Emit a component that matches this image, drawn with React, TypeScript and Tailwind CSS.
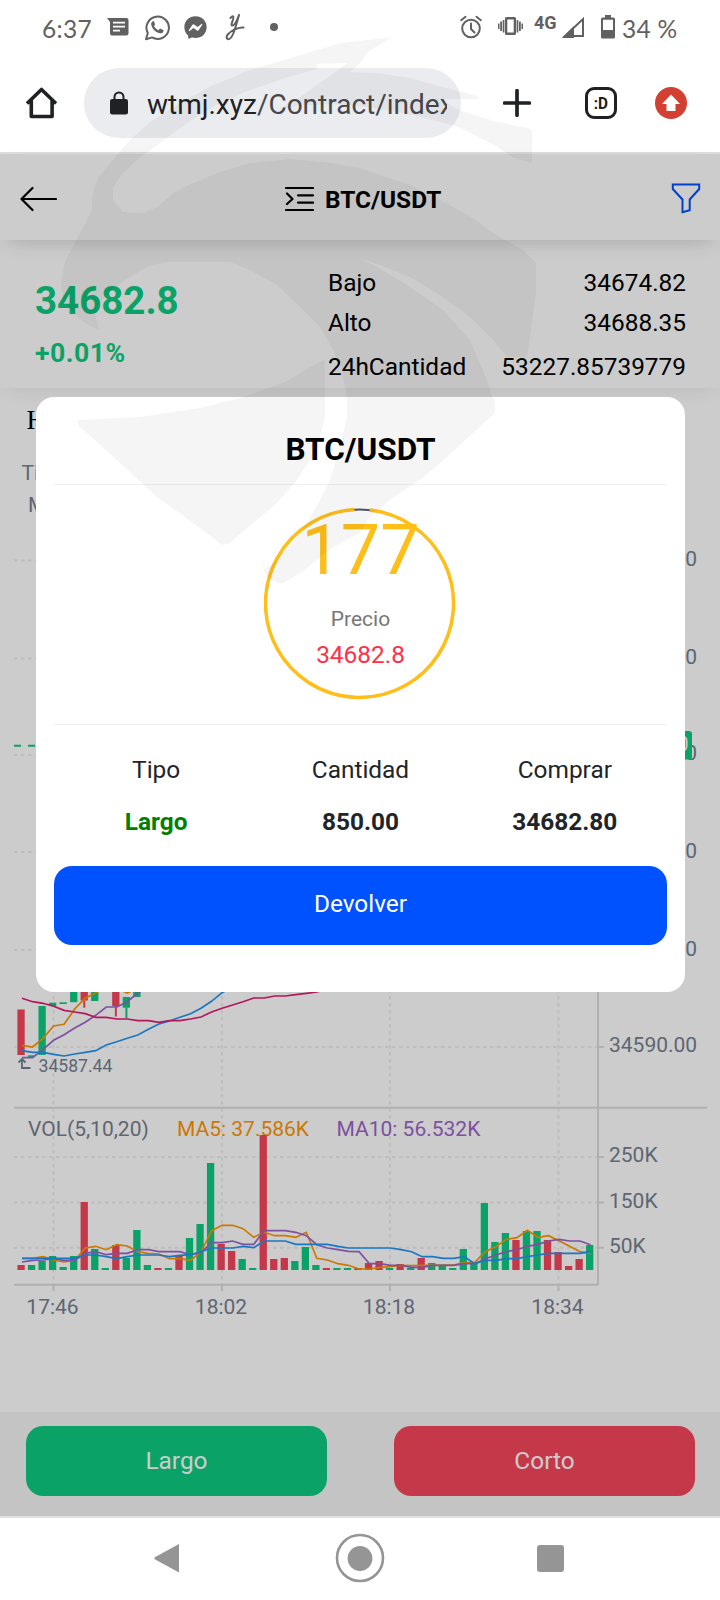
import type { ReactNode } from "react";
import { FaFacebookMessenger } from "react-icons/fa";

const UP = "#0ecb81";
const DOWN = "#f6465d";
const AXIS = "#76808f";
const ORANGE = "#ff9600";
const PURPLE = "#9d65c9";
const BLUE = "#2196f3";
const PINK = "#e11d74";

const BAR_START = 21;
const BAR_STEP = 10.53;
const VOL_BASE = 1270;

// negative = falling bar
const volumes = [
  -5, 5, 9, 14, 3, 14, -68, 21, 2, -25, 12, 40, 5, -2, 2, -14, 32, 46, 107, -26,
  -19, 11, 2, -135, -11, -12, 9, 23, 5, -2, 2, 2, -2, -7, -9, 2, -6, 2, -12, 7,
  4, 2, 21, 7, 67, 28, 37, -30, 39, 39, -30, -18, -4, -11, 25,
];

// line heights above the volume baseline
const volMa5 = [
  35, 35, 40, 30, 24, 29, 66, 71, 61, 76, 72, 55, 50, 48, 34, 34, 29, 53, 118,
  134, 134, 124, 98, 113, 103, 103, 98, 113, 35, 30, 19, 14, 3, 3, 8, 10, 14,
  13, 14, 14, 15, 15, 22, 23, 55, 70, 92, 97, 119, 98, 103, 88, 71, 55, 50,
];
const volMa10 = [
  24, 29, 30, 34, 29, 29, 50, 55, 46, 50, 50, 61, 61, 55, 55, 55, 46, 52, 82,
  82, 87, 77, 77, 118, 118, 118, 113, 103, 76, 66, 61, 56, 55, 19, 19, 14, 14,
  8, 8, 14, 14, 14, 19, 19, 34, 45, 55, 61, 71, 77, 87, 92, 87, 87, 76,
];
const volMa20 = [
  35, 35, 35, 35, 35, 35, 45, 45, 40, 34, 40, 45, 45, 45, 40, 44, 46, 55, 66,
  66, 66, 71, 67, 87, 87, 87, 77, 77, 77, 77, 71, 66, 66, 66, 66, 66, 61, 55,
  40, 40, 35, 35, 40, 19, 29, 29, 34, 34, 40, 45, 50, 50, 50, 50, 55,
];

const priceLines = [
  { color: ORANGE, points: [256, 261, 235, 198, 193, 147, 115, 98, 80, 85, 99, 85] },
  { color: PURPLE, points: [293, 293, 268, 241, 224, 204, 187, 166, 141, 141, 125, 99, 80] },
  {
    color: BLUE,
    points: [
      272, 277, 277, 283, 288, 282, 277, 272, 255, 245, 235, 225, 208, 192, 183,
      172, 161, 145, 124, 98, 80,
    ],
  },
  {
    color: PINK,
    points: [
      115, 125, 130, 139, 151, 156, 161, 172, 172, 177, 177, 182, 182, 187, 182,
      182, 177, 171, 156, 145, 135, 125, 114, 114, 108, 108, 104, 100, 96, 88,
    ],
  },
];

const candles = [
  { i: 0, top: 1009.5, bottom: 1055, color: DOWN },
  { i: 1, top: 1055.3, bottom: 1057, color: UP },
  { i: 2, top: 1006, bottom: 1055, color: UP },
  { i: 3, top: 1002.7, bottom: 1006, color: UP },
  { i: 4, top: 1002.3, bottom: 1004, color: UP },
  { i: 5, top: 980, bottom: 1002.2, color: UP },
  { i: 6, top: 980, bottom: 1000.5, wick: 1007.7, color: DOWN },
  { i: 7, top: 980, bottom: 1001, color: UP },
  { i: 9, top: 980, bottom: 1006, wick: 1016.5, color: DOWN },
  { i: 10, top: 997, bottom: 1007.7, wick: 1018.3, color: UP },
  { i: 11, top: 980, bottom: 997, color: UP },
];

const priceTicks = [
  { label: "34740.00", y: 560.5, base: 565.5 },
  { label: "34710.00", y: 658.5, base: 663.7 },
  { label: "34680.00", y: 755, base: 760 },
  { label: "34650.00", y: 852, base: 857.7 },
  { label: "34620.00", y: 950, base: 956 },
  { label: "34590.00", y: 1047, base: 1051.7 },
];

const volTicks = [
  { label: "250K", y: 1157, base: 1162 },
  { label: "150K", y: 1202.5, base: 1207.7 },
  { label: "50K", y: 1247.7, base: 1253 },
];

const timeTicks = [
  { label: "17:46", x: 53.5 },
  { label: "18:02", x: 222 },
  { label: "18:18", x: 390 },
  { label: "18:34", x: 558.5 },
];

const barX = (i: number) => BAR_START + i * BAR_STEP;

function toPoints(values: number[], toY: (v: number) => number) {
  return values.map((v, i) => `${(barX(i) + 1).toFixed(1)},${toY(v).toFixed(1)}`).join(" ");
}

function StatusBar() {
  return (
    <div className="flex h-[54px] items-center text-[#616161]">
      <span className="ml-[42px] w-[48px] pt-[4px] font-[Lato,sans-serif] text-[24.500px] leading-none tracking-[0.3px]">
        6:37
      </span>
      <svg className="ml-[17px]" width="22" height="18" viewBox="0 0 22 18">
        <path
          fill="currentColor"
          fillRule="evenodd"
          d="M0 0h19.5a2 2 0 0 1 2 2v13.500a2 2 0 0 1-2 2H5a2 2 0 0 1-2-2V4zM6 3.800v1.700h12V3.800zM6 7.800v1.700h12V7.800zM6 11.800v1.700h7v-1.700z"
        />
      </svg>
      <svg className="ml-[15px]" width="26" height="27" viewBox="0 0 26 27" fill="none">
        <path
          d="M2 25.200 3.800 19A11.200 11.200 0 1 1 8 23.400z"
          stroke="currentColor"
          strokeWidth="2"
          strokeLinejoin="round"
        />
        <path
          d="M9 7.200c-1.200.5-2 1.800-1.800 3.200.6 4.200 4.800 8.400 9.200 8.800 1.500.1 2.900-.9 3.100-2.300.1-.5 0-.7-.4-.9l-2.600-1.300c-.4-.2-.7-.1-1 .3l-1 1.200c-1.900-.7-3.700-2.400-4.500-4.300l.9-1.100c.2-.3.3-.5.1-.9L10 7.600c-.2-.4-.5-.6-1-.4z"
          fill="currentColor"
        />
      </svg>
      <FaFacebookMessenger className="ml-[14px] text-[23px]" />
      <svg
        className="ml-[18px]"
        width="20"
        height="28"
        viewBox="0 0 20 28"
        fill="none"
        stroke="currentColor"
        strokeWidth="2"
        strokeLinecap="round"
        strokeLinejoin="round"
      >
        <path d="M5.500 5C8 2 9 3 8 6.500C7 10 5.500 12.500 7.500 12.500C10 12.500 12.500 6 14 2C12 9 10.500 15 8.500 20C6.500 25 4 27.500 2 25.500C.5 23 4 19.500 8.500 17C12.500 15 15 14 18.500 14.500" />
      </svg>
      <span className="ml-[25px] size-2 rounded-full bg-[#616161]" />

      <svg
        className="ml-auto"
        width="22"
        height="24"
        viewBox="0 0 22 24"
        fill="none"
        stroke="currentColor"
        strokeWidth="2"
        strokeLinecap="round"
      >
        <circle cx="11" cy="13.500" r="8.800" />
        <path d="M1.200 5.200 5.500 1.800M20.800 5.200 16.500 1.800M11 8.500V14l3.500 3.500" />
      </svg>
      <svg className="mb-[2px] ml-[16px]" width="25" height="20" viewBox="0 0 25 20" fill="currentColor">
        <path fillRule="evenodd" d="M8.500 1h8q1.500 0 1.500 1.500v15q0 1.500-1.500 1.500h-8Q7 19 7 17.500v-15Q7 1 8.500 1zM9.300 3.500v13h6.400v-13z" />
        <path d="M0 7.500h1.500v5.500H0zM2.200 5.500H4V15H2.200zM4.700 4h1.700v12.500H4.700zM18.600 4h1.700v12.500h-1.700zM21 5.500h1.800V15H21zM23.500 7.500H25v5.500h-1.500z" />
      </svg>
      <span className="ml-[11px] w-[25px] pb-[9px] font-[Roboto,sans-serif] text-[18px] leading-none font-bold">
        4G
      </span>
      <svg className="ml-[3px]" width="23" height="22" viewBox="0 0 23 22">
        <path d="M21 3v17H3z" fill="none" stroke="currentColor" strokeWidth="2" />
        <path d="M0 22 12 10v12z" fill="currentColor" />
      </svg>
      <svg className="ml-[16px]" width="14" height="24" viewBox="0 0 14 24">
        <path
          fill="currentColor"
          fillRule="evenodd"
          d="M4 0h6v2.500h2.500A1.500 1.500 0 0 1 14 4v18a1.500 1.500 0 0 1-1.500 1.500h-11A1.500 1.500 0 0 1 0 22V4a1.500 1.500 0 0 1 1.500-1.500H4zM2 4.800V15h10V4.800z"
        />
      </svg>
      <span className="mr-[42px] ml-[7px] w-[56px] pt-[4px] font-[Lato,sans-serif] text-[24.500px] leading-none tracking-[0.3px] whitespace-nowrap">
        34 %
      </span>
    </div>
  );
}

function AddressBar() {
  return (
    <div className="flex h-[98px] items-center text-[#202124]">
      <svg
        className="ml-[25px]"
        width="33"
        height="34"
        viewBox="0 0 33 34"
        fill="none"
        stroke="currentColor"
        strokeWidth="3.600"
        strokeLinejoin="round"
      >
        <path d="M2 17.500 16.500 3.500 31 17.500M6.300 14.500v16h20.800v-16" />
      </svg>
      <div className="ml-[26px] flex h-[70px] w-[377px] items-center rounded-full bg-[#ebecf0]">
        <svg className="ml-[26px] shrink-0" width="18" height="24" viewBox="0 0 18 24">
          <path d="M4.500 9V6a4.500 4.500 0 0 1 9 0v3" fill="none" stroke="currentColor" strokeWidth="2" />
          <rect y="8" width="18" height="15.500" rx="2.200" fill="currentColor" />
        </svg>
        <div className="mt-[3px] ml-[19px] w-[300px] overflow-hidden text-[28px] leading-[40px] whitespace-nowrap">
          wtmj.xyz<span className="text-[#46484b]">/Contract/index</span>
        </div>
      </div>
      <svg className="ml-[42px]" width="28" height="28" viewBox="0 0 28 28">
        <path d="M14 1.700v24.600M1.700 14h24.600" stroke="currentColor" strokeWidth="3.700" strokeLinecap="round" />
      </svg>
      <div className="ml-[54px] flex size-8 items-center justify-center rounded-[9px] border-[3.500px] border-[#202124] text-[17px] leading-none font-bold">
        <span className="scale-x-90">:D</span>
      </div>
      <svg className="ml-[38px]" width="32" height="32" viewBox="0 0 32 32">
        <circle cx="16" cy="16" r="16" fill="#d33f31" />
        <path d="M16 7.500 25 17h-4.500v7h-9v-7H7z" fill="#fff" />
      </svg>
    </div>
  );
}

function Header() {
  return (
    <div className="relative z-10 flex h-[86px] items-center bg-white pt-1 text-black shadow-[0_8px_20px_-8px_rgba(0,0,0,0.2)]">
      <svg
        className="ml-[19px]"
        width="38"
        height="26"
        viewBox="0 0 38 26"
        fill="none"
        stroke="currentColor"
        strokeWidth="2.200"
        strokeLinecap="round"
        strokeLinejoin="round"
      >
        <path d="M13.500 2 2.500 13l11 11M2.500 13h34.500" />
      </svg>
      <svg
        className="ml-[227px]"
        width="30"
        height="26"
        viewBox="0 0 30 26"
        fill="none"
        stroke="currentColor"
        strokeWidth="2.200"
        strokeLinecap="round"
        strokeLinejoin="round"
      >
        <path d="M2 2h27M14 9.300h15M14 16.600h15M2 24h27M3 7.500 8.500 13 3 18" />
      </svg>
      <span className="mt-[2px] ml-[11px] text-[24.400px] leading-none font-bold">BTC/USDT</span>
      <svg
        className="mr-[19px] ml-auto"
        width="30"
        height="32"
        viewBox="0 0 30 32"
        fill="none"
        stroke="#0052ff"
        strokeWidth="2"
      >
        <path d="M1.800 1.500h26.400v4.500L18.700 16.500v10.800l-7.200 2V16.500L1.800 6z" />
      </svg>
    </div>
  );
}

function TickerRow({ label, value }: { label: string; value: string }) {
  return (
    <div className="flex justify-between">
      <span>{label}</span>
      <span>{value}</span>
    </div>
  );
}

function Ticker() {
  return (
    <div className="relative flex h-[148px] justify-between bg-white pr-[34px] pl-[35px] shadow-[0_8px_20px_-8px_rgba(0,0,0,0.1)]">
      <div className="font-bold text-[#0ecb81]">
        <div className="pt-[41px] text-[38.500px] leading-[40px]">34682.8</div>
        <div className="pt-[17px] text-[26.600px] leading-[30px] tracking-[0.5px]">+0.01%</div>
      </div>
      <div className="w-[358px] pt-[29px] text-[24.400px] leading-[28px] text-black">
        <TickerRow label="Bajo" value="34674.82" />
        <div className="mt-3">
          <TickerRow label="Alto" value="34688.35" />
        </div>
        <div className="mt-4">
          <TickerRow label="24hCantidad" value="53227.85739779" />
        </div>
      </div>
    </div>
  );
}

function Chart() {
  return (
    <svg
      width="720"
      height="1024"
      viewBox="0 388 720 1024"
      className="block font-[Roboto,sans-serif]"
      fontSize="21"
      fill={AXIS}
    >
      {/* grid */}
      <g stroke="#ededed" strokeWidth="2" strokeDasharray="3.500 3.500">
        {[...priceTicks, ...volTicks].map((t) => (
          <line key={t.label} x1="14" x2="597" y1={t.y} y2={t.y} />
        ))}
        {timeTicks.map((t) => (
          <line key={t.label} x1={t.x} x2={t.x} y1="520" y2="1284" />
        ))}
      </g>

      {/* axes */}
      <g stroke="#dddddd" strokeWidth="2" fill="none">
        <path d="M598 520V1285M14 1107.800H707M14 1284.700H598" />
        {[...priceTicks, ...volTicks].map((t) => (
          <line key={t.label} x1="598" x2="604" y1={t.y} y2={t.y} />
        ))}
        {timeTicks.map((t) => (
          <line key={t.label} x1={t.x} x2={t.x} y1="1285" y2="1291" />
        ))}
      </g>

      <text x="26.500" y="429" fontSize="27" fill="#000" className="font-[Liberation_Serif,serif]">
        Hora
      </text>
      <text x="21.500" y="479.700">Time</text>
      <text x="28" y="511.700">MA5</text>

      {/* candles */}
      {candles.map((c) => (
        <g key={c.i} fill={c.color}>
          <rect x={barX(c.i) - 3.600} y={c.top} width="7.300" height={c.bottom - c.top} />
          {c.wick && <rect x={barX(c.i) - 0.9} y={c.bottom} width="2" height={c.wick - c.bottom} />}
        </g>
      ))}
      {priceLines.map((l) => (
        <polyline
          key={l.color}
          points={toPoints(l.points, (v) => 960 + v / 3)}
          fill="none"
          stroke={l.color}
          strokeWidth="1.700"
        />
      ))}
      <path d="M18.500 1062.500 22 1059l3.500 3.500M22 1059v9h8.500" fill="none" stroke={AXIS} strokeWidth="1.800" />
      <text x="38.500" y="1071.700" fontSize="17.600">34587.44</text>

      {/* volume */}
      <text x="28" y="1136">VOL(5,10,20)</text>
      <text x="177" y="1136" fill={ORANGE}>MA5: 37.586K</text>
      <text x="336.500" y="1136" fill={PURPLE}>MA10: 56.532K</text>
      {volumes.map((v, i) => (
        <rect
          key={i}
          x={barX(i) - 3.600}
          y={VOL_BASE - Math.abs(v)}
          width="7.300"
          height={Math.abs(v)}
          fill={v < 0 ? DOWN : UP}
        />
      ))}
      {[
        { color: ORANGE, points: volMa5 },
        { color: PURPLE, points: volMa10 },
        { color: BLUE, points: volMa20 },
      ].map((l) => (
        <polyline
          key={l.color}
          points={toPoints(l.points, (v) => VOL_BASE - v / 3)}
          fill="none"
          stroke={l.color}
          strokeWidth="1.700"
        />
      ))}

      {/* labels */}
      {[...priceTicks, ...volTicks].map((t) => (
        <text key={t.label} x="609" y={t.base}>
          {t.label}
        </text>
      ))}
      {timeTicks.map((t) => (
        <text key={t.label} x={t.x - 1} y="1313.700" textAnchor="middle">
          {t.label}
        </text>
      ))}

      {/* last price */}
      <line x1="14" x2="598" y1="745.700" y2="745.700" stroke={UP} strokeWidth="2" strokeDasharray="7 7" />
      <rect x="598" y="731" width="94" height="28.500" rx="3" fill={UP} />
      <text x="688.500" y="750.500" fontSize="20" fill="#fff" textAnchor="end">
        34682.80
      </text>
    </svg>
  );
}

function Column({ label, children }: { label: string; children: ReactNode }) {
  return (
    <div className="flex flex-col items-center">
      <span>{label}</span>
      <span className="mt-[24px] font-bold">{children}</span>
    </div>
  );
}

function OrderModal() {
  return (
    <div className="absolute top-[243px] left-[36px] z-30 h-[595px] w-[649px] rounded-[18px] bg-white px-[18px] text-[#212529]">
      <h2 className="h-[88px] border-b border-[#f0f0f0] pt-[36px] text-center text-[31.500px] leading-[34px] font-bold text-black">
        BTC/USDT
      </h2>
      <div className="flex h-[240px] justify-center border-b border-[#f0f0f0] pt-[23px]">
        <div className="relative flex size-[192px] flex-col items-center">
          <svg className="absolute top-0 -left-px" width="192" height="192" viewBox="0 0 192 192" fill="none">
            <circle cx="95.500" cy="95.500" r="94" stroke="#53536a" strokeWidth="2" />
            <path d="M105.500 2A94 94 0 1 1 90.500 1.600" stroke="#ffbe18" strokeWidth="3.500" />
          </svg>
          <span className="relative mt-[7px] h-[70px] text-[70px] leading-[70px] text-[#ffbe18]">177</span>
          <span className="relative mt-[20px] text-[21px] leading-[28px] text-[#777777]">Precio</span>
          <span className="relative mt-[8px] text-[24.400px] leading-[28px] text-[#ff3047]">34682.8</span>
        </div>
      </div>
      <div className="grid grid-cols-3 pt-[31px] text-[24.400px] leading-[28px]">
        <Column label="Tipo">
          <span className="text-[#008000]">Largo</span>
        </Column>
        <Column label="Cantidad">850.00</Column>
        <Column label="Comprar">34682.80</Column>
      </div>
      <button className="mt-[30px] block h-[79px] w-full rounded-[18px] bg-[#0052ff] pb-[2px] text-[24.400px] text-white">
        Devolver
      </button>
    </div>
  );
}

function TradeBar() {
  return (
    <div className="flex h-[104px] justify-between bg-[#f5f5f5] px-[26px] pt-[14px] pr-[25px] text-[24.400px] text-white">
      <button className="h-[70px] w-[301px] rounded-[17px] bg-[#0ecb81]">Largo</button>
      <button className="h-[70px] w-[301px] rounded-[17px] bg-[#f6465d]">Corto</button>
    </div>
  );
}

function NavBar() {
  return (
    <div className="flex h-[84px] items-center border-t-2 border-[#e0e0e0] bg-white pb-[2px] text-[#959595]">
      <svg className="ml-[154px]" width="25" height="30" viewBox="0 0 25 30" fill="currentColor">
        <path d="M25 1v28.500L.8 16.200q-1-1 0-2z" />
      </svg>
      <svg className="ml-[156px]" width="50" height="50" viewBox="0 0 50 50">
        <circle cx="25" cy="25" r="23" fill="none" stroke="currentColor" strokeWidth="2.600" />
        <circle cx="25" cy="25.500" r="12.400" fill="currentColor" />
      </svg>
      <div className="ml-[152px] h-[27px] w-[27px] rounded-[3px] bg-[#959595]" />
    </div>
  );
}

function Watermark() {
  return (
    <svg
      className="pointer-events-none absolute top-0 left-0 z-50"
      width="720"
      height="600"
      viewBox="0 0 720 600"
      fill="#000"
      fillOpacity="0.038"
    >
      <path d="M392 37L340 43L294 57L250 70L211 86L180 103L150 122L130 140L113 160L98 178L92 196L92 210L84 226L73 246L65 262L61 283L64 302L76 316L88 325L99 330L96 318L98 304L112 290L128 278L147 267L167 262H230L250 270L277 285L300 307L320 327L333 350L342 370L347 397V417L340 447L330 480L313 513L293 543L273 563L263 570L270 580L282 584L302 572L333 547L360 533L373 513L397 495L420 480L447 457L473 433L495 413V400L492 397L487 380L470 340L443 310L410 287L377 267L361 259L380 265L410 277L437 293L470 317L493 340L507 357L527 357L532 323L536 293V263L523 250L493 233L473 218L440 200L410 185L380 175L360 168L333 163L290 159L250 163L220 172L193 183L173 193L157 207L143 213L123 212L113 200V187L123 173L137 160L160 143L187 123L213 107L245 92L285 78L317 69L317 64L347 63L335 72L300 97L278 110L294 106L330 104L367 107L413 115L459 127L496 146L514 158L532 163V130L527 128L494 121L459 110L440 99L478 99V96L443 87L410 78L378 73L350 72L360 63L368 52Z" />
      <path d="M78 420L140 417L200 408L240 398L283 383L325 359V417L318 447L297 480L277 503L253 523L230 543L222 545L193 523L157 497L120 463L78 425Z" />
    </svg>
  );
}

export default function App() {
  return (
    <div className="relative h-[1600px] w-[720px] overflow-hidden bg-white font-[Roboto,sans-serif]">
      <StatusBar />
      <AddressBar />
      <div className="h-[2px] bg-[#dcdcdc]" />
      <div className="relative">
        <Header />
        <Ticker />
        <Chart />
        <TradeBar />
        <div className="absolute inset-0 z-20 bg-black/20" />
        <OrderModal />
      </div>
      <NavBar />
      <Watermark />
    </div>
  );
}
